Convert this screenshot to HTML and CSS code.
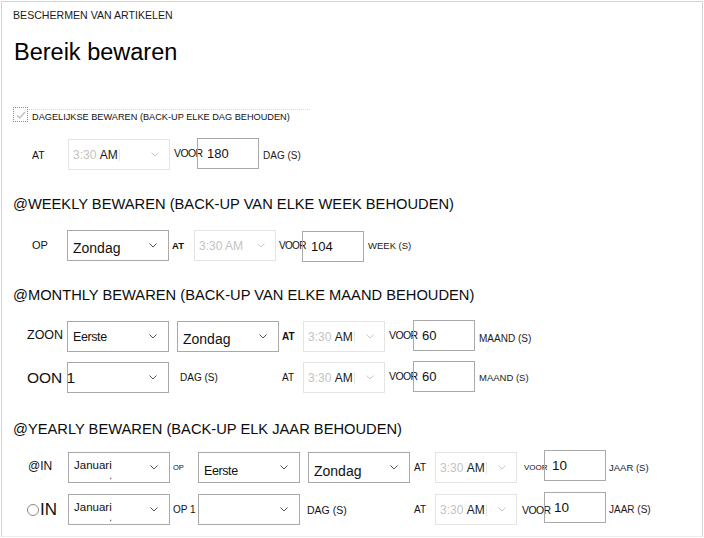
FILE: index.html
```html
<!DOCTYPE html>
<html lang="nl">
<head>
<meta charset="utf-8">
<title>Bereik bewaren</title>
<link rel="stylesheet" href="styles.css">
</head>
<body>
<div class="panel">
  <div class="crumb">BESCHERMEN VAN ARTIKELEN</div>
  <h1 class="title">Bereik bewaren</h1>

  <div class="check-row">
    <span class="checkbox"><svg width="12" height="12" viewBox="0 0 12 12"><path d="M2 6.5 L4.8 9 L10 3" fill="none" stroke="#b9b9b9" stroke-width="1.2"/></svg></span>
    <span class="check-label">DAGELIJKSE BEWAREN (BACK-UP ELKE DAG BEHOUDEN)</span>
  </div>

  <div class="row row-daily">
    <span class="lead lead-at">AT</span>
    <div class="sel dis sel-wide"><span class="dim">3:30</span>&nbsp;<span class="am">AM</span><span class="caret"></span><span class="chev"><svg width="8" height="5" viewBox="0 0 8 5"><path d="M0.5 0.5 L4 4 L7.5 0.5" fill="none" stroke="currentColor"/></svg></span></div>
    <span class="lbl voor voor-a">VOOR</span>
    <div class="inp inp-a">180</div>
    <span class="unit">DAG (S)</span>
  </div>

  <h2 class="section sec-week">@WEEKLY BEWAREN (BACK-UP VAN ELKE WEEK BEHOUDEN)</h2>
  <div class="row row-week">
    <span class="lead lead-op">OP</span>
    <div class="sel"><span class="val low">Zondag</span><span class="chev"><svg width="8" height="5" viewBox="0 0 8 5"><path d="M0.5 0.5 L4 4 L7.5 0.5" fill="none" stroke="currentColor"/></svg></span></div>
    <span class="lbl at-bold at-w">AT</span>
    <div class="sel dis all-dim"><span class="dim">3:30 AM</span><span class="chev"><svg width="8" height="5" viewBox="0 0 8 5"><path d="M0.5 0.5 L4 4 L7.5 0.5" fill="none" stroke="currentColor"/></svg></span></div>
    <span class="lbl voor voor-w">VOOR</span>
    <div class="inp inp-w">104</div>
    <span class="unit unit-sm">WEEK (S)</span>
  </div>

  <h2 class="section sec-month">@MONTHLY BEWAREN (BACK-UP VAN ELKE MAAND BEHOUDEN)</h2>
  <div class="row row-m1">
    <span class="lead lead-zoon">ZOON</span>
    <div class="sel"><span class="val val-eerste">Eerste</span><span class="chev"><svg width="8" height="5" viewBox="0 0 8 5"><path d="M0.5 0.5 L4 4 L7.5 0.5" fill="none" stroke="currentColor"/></svg></span></div>
    <div class="sel sel-gap"><span class="val low">Zondag</span><span class="chev"><svg width="8" height="5" viewBox="0 0 8 5"><path d="M0.5 0.5 L4 4 L7.5 0.5" fill="none" stroke="currentColor"/></svg></span></div>
    <span class="lbl at-bold at-m">AT</span>
    <div class="sel dis"><span class="dim">3:30</span>&nbsp;<span class="am">AM</span><span class="caret"></span><span class="chev"><svg width="8" height="5" viewBox="0 0 8 5"><path d="M0.5 0.5 L4 4 L7.5 0.5" fill="none" stroke="currentColor"/></svg></span></div>
    <span class="lbl voor voor-m">VOOR</span>
    <div class="inp inp-m">60</div>
    <span class="unit">MAAND (S)</span>
  </div>
  <div class="row row-m2">
    <span class="lead lead-oon">OON 1</span>
    <div class="sel"><span class="chev"><svg width="8" height="5" viewBox="0 0 8 5"><path d="M0.5 0.5 L4 4 L7.5 0.5" fill="none" stroke="currentColor"/></svg></span></div>
    <span class="lbl dag-m">DAG (S)</span>
    <span class="lbl at-m at-plain">AT</span>
    <div class="sel dis"><span class="dim">3:30</span>&nbsp;<span class="am">AM</span><span class="caret"></span><span class="chev"><svg width="8" height="5" viewBox="0 0 8 5"><path d="M0.5 0.5 L4 4 L7.5 0.5" fill="none" stroke="currentColor"/></svg></span></div>
    <span class="lbl voor voor-m">VOOR</span>
    <div class="inp inp-m">60</div>
    <span class="unit unit-sm">MAAND (S)</span>
  </div>

  <h2 class="section sec-year">@YEARLY BEWAREN (BACK-UP ELK JAAR BEHOUDEN)</h2>
  <div class="row row-y1">
    <span class="lead lead-in">@IN</span>
    <div class="sel sel-y"><span class="val val-top">Januari</span><span class="tick"></span><span class="chev"><svg width="8" height="5" viewBox="0 0 8 5"><path d="M0.5 0.5 L4 4 L7.5 0.5" fill="none" stroke="currentColor"/></svg></span></div>
    <span class="lbl op-y op-tiny">OP</span>
    <div class="sel sel-y"><span class="val val-eerste lower">Eerste</span><span class="chev"><svg width="8" height="5" viewBox="0 0 8 5"><path d="M0.5 0.5 L4 4 L7.5 0.5" fill="none" stroke="currentColor"/></svg></span></div>
    <div class="sel sel-gap"><span class="val lower">Zondag</span><span class="chev"><svg width="8" height="5" viewBox="0 0 8 5"><path d="M0.5 0.5 L4 4 L7.5 0.5" fill="none" stroke="currentColor"/></svg></span></div>
    <span class="lbl at-y">AT</span>
    <div class="sel dis"><span class="dim">3:30</span>&nbsp;<span class="am">AM</span><span class="caret"></span><span class="chev"><svg width="8" height="5" viewBox="0 0 8 5"><path d="M0.5 0.5 L4 4 L7.5 0.5" fill="none" stroke="currentColor"/></svg></span></div>
    <span class="lbl voor voor-y voor-sm">VOOR</span>
    <div class="inp inp-y inp-y1">10</div>
    <span class="unit unit-y unit-sm">JAAR (S)</span>
  </div>
  <div class="row row-y2">
    <span class="lead lead-radio"><span class="radio"></span><span class="in-big">IN</span></span>
    <div class="sel sel-y"><span class="val val-top">Januari</span><span class="tick"></span><span class="chev"><svg width="8" height="5" viewBox="0 0 8 5"><path d="M0.5 0.5 L4 4 L7.5 0.5" fill="none" stroke="currentColor"/></svg></span></div>
    <span class="lbl op-y">OP 1</span>
    <div class="sel sel-y"><span class="chev"><svg width="8" height="5" viewBox="0 0 8 5"><path d="M0.5 0.5 L4 4 L7.5 0.5" fill="none" stroke="currentColor"/></svg></span></div>
    <span class="lbl dag-y">DAG (S)</span>
    <span class="lbl at-y">AT</span>
    <div class="sel dis"><span class="dim">3:30</span>&nbsp;<span class="am">AM</span><span class="caret"></span><span class="chev"><svg width="8" height="5" viewBox="0 0 8 5"><path d="M0.5 0.5 L4 4 L7.5 0.5" fill="none" stroke="currentColor"/></svg></span></div>
    <span class="lbl voor voor-y">VOOR</span>
    <div class="inp inp-y inp-y2">10</div>
    <span class="unit unit-y">JAAR (S)</span>
  </div>
</div>
</body>
</html>
```

FILE: styles.css
```css
html, body {
  margin: 0;
  padding: 0;
  background: #ffffff;
}

body {
  font-family: "Liberation Sans", Arial, sans-serif;
  color: #111111;
}

.panel {
  box-sizing: border-box;
  width: 702px;
  height: 536px;
  margin: 1px 0 0 1px;
  border: 1px solid #d3d3d3;
  border-bottom-color: #ebebeb;
  padding: 7px 0 0 11px;
}

.crumb {
  font-size: 10.6px;
  line-height: 13px;
  color: #1a1a1a;
}

.title {
  margin: 16px 0 0 1px;
  font-size: 23.5px;
  line-height: 28px;
  font-weight: normal;
  color: #000000;
}

.check-row {
  display: flex;
  align-items: flex-start;
  height: 15px;
  margin-top: 41px;
}

.checkbox {
  box-sizing: border-box;
  width: 15px;
  height: 15px;
  border: 1px dotted #8c8c8c;
  display: flex;
  align-items: center;
  justify-content: center;
  flex: none;
}

.check-label {
  box-sizing: border-box;
  width: 281px;
  margin: 2px 0 0 1px;
  padding: 2px 0 0 3px;
  border-top: 1px dotted #d8d8d8;
  font-size: 9.2px;
  line-height: 11px;
  white-space: nowrap;
  color: #111111;
}

.row {
  display: flex;
  align-items: center;
  height: 31px;
}

.row-daily { margin-top: 17px; }
.row-week { margin-top: 17px; }
.row-m1 { margin-top: 17px; }
.row-m2 { margin-top: 10px; }
.row-y1 { margin-top: 14px; }
.row-y2 { margin-top: 11px; }

.section {
  margin: 0;
  font-size: 14.7px;
  line-height: 18px;
  font-weight: normal;
  color: #0c0c0c;
  white-space: nowrap;
}

.sec-week { margin-top: 25px; }
.sec-month { margin-top: 25px; }
.sec-year { margin-top: 27px; }

.lead, .lbl, .unit {
  flex: none;
  white-space: nowrap;
  box-sizing: border-box;
}

.lead-at { margin-left: 19px; width: 36px; font-size: 10.5px; }
.lead-op { margin-left: 19px; width: 35px; font-size: 11px; margin-top: -2px; }
.lead-zoon { margin-left: 14px; width: 40px; font-size: 12.5px; margin-top: -3px; }
.lead-oon { margin-left: 14px; width: 40px; font-size: 15.5px; }
.lead-in { margin-left: 15px; width: 40px; font-size: 12px; margin-top: -3px; }
.lead-radio {
  margin-left: 14px;
  width: 41px;
  display: flex;
  align-items: center;
}

.radio {
  box-sizing: border-box;
  width: 12px;
  height: 12px;
  border: 1px solid #8a8a8a;
  border-radius: 50%;
  margin-right: 1px;
}

.in-big {
  font-size: 17px;
  line-height: 18px;
}

.sel {
  box-sizing: border-box;
  flex: none;
  width: 102px;
  height: 31px;
  border: 1px solid #a9a9a9;
  display: flex;
  align-items: center;
  padding-left: 4px;
  position: relative;
  color: #111111;
  font-size: 14px;
}

.sel-gap { margin-left: 8px; }

.sel .chev {
  margin-left: auto;
  margin-right: 11px;
  display: flex;
  color: #555555;
}

.sel.dis {
  width: 82px;
  border-color: #e4e4e4;
  font-size: 12px;
}

.sel.sel-wide { width: 102px; }

.sel.dis .chev {
  color: #c9c9c9;
  margin-right: 10px;
}

.val { padding-left: 1px; }
.val.low { padding-top: 5px; }
.val.lower { padding-top: 7px; }
.val-eerste { font-size: 12.5px; letter-spacing: -0.4px; }
.val-top {
  align-self: flex-start;
  padding-top: 6px;
  font-size: 11.5px;
}

.tick {
  position: absolute;
  left: 41px;
  top: 25px;
  width: 2px;
  height: 2px;
  border-left: 1px solid #666666;
  transform: rotate(30deg);
}

.dim { color: #c3c3c3; }
.am { color: #1a1a1a; }
.caret {
  width: 1px;
  height: 12px;
  margin-left: 1px;
  background: #e6e6e6;
}

.inp {
  box-sizing: border-box;
  flex: none;
  width: 62px;
  height: 31px;
  border: 1px solid #a9a9a9;
  padding-left: 5px;
  display: flex;
  align-items: center;
  font-size: 13px;
  color: #111111;
  margin-top: -2px;
}

.inp-a { padding-left: 9px; margin-top: -3px; }
.inp-w { padding-left: 8px; margin-top: 1px; }
.inp-m { padding-left: 8px; margin-top: -3px; }
.inp-y { font-size: 13.5px; margin-top: -4px; }
.inp-y1 { padding-left: 7px; }
.inp-y2 { padding-left: 9px; }

.voor {
  font-size: 10.5px;
  letter-spacing: -0.6px;
}
.voor-a { width: 27px; padding-left: 4px; margin-top: -3px; }
.voor-w { width: 26px; padding-left: 3px; font-size: 10px; letter-spacing: -0.7px; }
.voor-m { width: 28px; padding-left: 4px; margin-top: -3px; }
.voor-y { width: 27px; padding-left: 5px; }
.voor-sm { padding-left: 7px; font-size: 8px; letter-spacing: 0; }

.at-bold { font-weight: bold; }
.at-w { width: 25px; padding-left: 3px; font-size: 9.5px; }
.at-m { width: 24px; padding-left: 3px; font-size: 10px; }
.at-plain { font-weight: normal; }
.at-y { width: 25px; padding-left: 4px; font-size: 10px; }

.op-y { width: 28px; padding-left: 3px; font-size: 10px; }
.op-tiny { font-size: 7.5px; }

.dag-m { width: 110px; padding-left: 11px; font-size: 10px; }
.dag-y { width: 110px; padding-left: 7px; font-size: 10.5px; }

.unit {
  margin-left: 4px;
  font-size: 10px;
  color: #1a1a1a;
}

.unit-sm { font-size: 9.5px; }
.unit-y { margin-left: 3px; }

.row-daily .unit { margin-top: 2px; }
.row-m1 .unit { margin-top: 4px; }
```
